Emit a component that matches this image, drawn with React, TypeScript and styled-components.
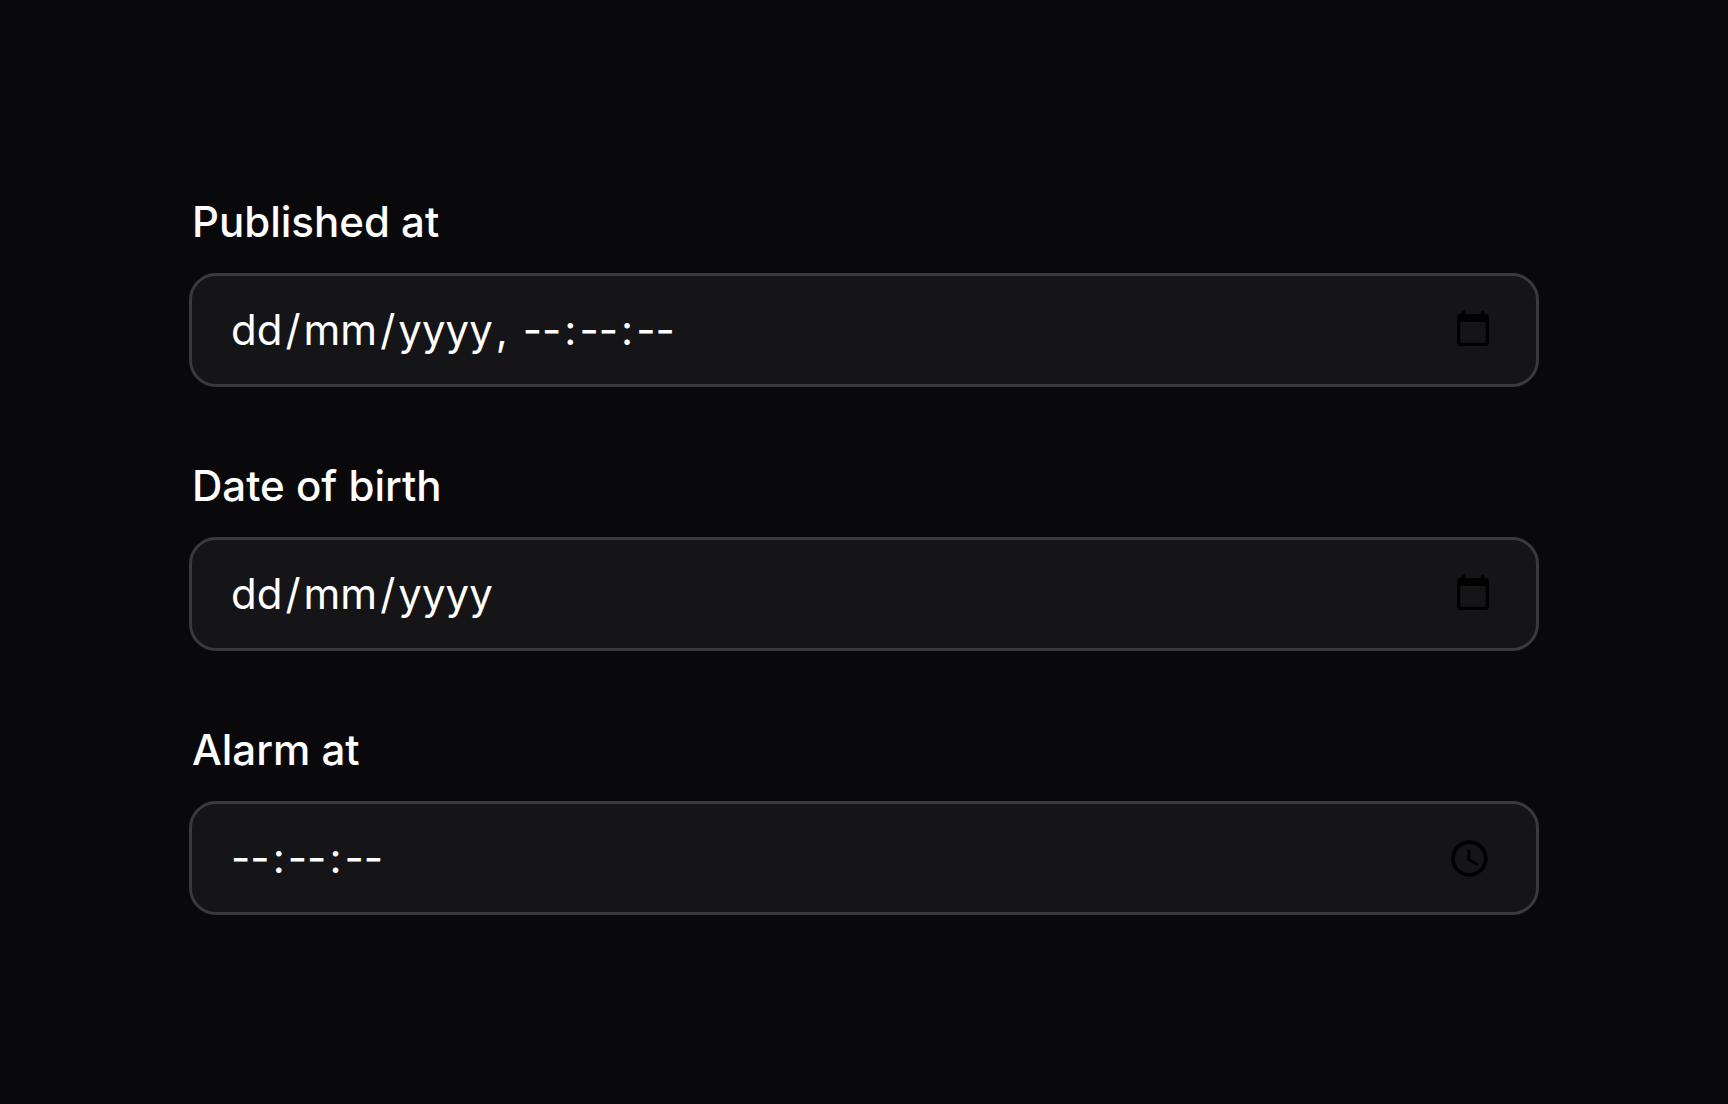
import React, { Fragment } from "react";
import styled, { createGlobalStyle } from "styled-components";

const GlobalStyle = createGlobalStyle`
  *, *::before, *::after { box-sizing: border-box; }
  body {
    margin: 0;
    background: #09090b;
    color: #ffffff;
    font-family: Inter, "Liberation Sans", sans-serif;
    -webkit-font-smoothing: antialiased;
  }
`;

const Form = styled.form`
  display: flex;
  flex-direction: column;
  justify-content: center;
  gap: 69px;
  min-height: 100vh;
  padding: 2px 189px 0;
`;

const Field = styled.div`
  display: flex;
  flex-direction: column;
  gap: 21px;
`;

const Label = styled.label`
  padding: 0 3px;
  font-size: 42px;
  line-height: 60px;
  font-weight: 500;
`;

const Control = styled.div`
  display: flex;
  align-items: center;
  padding: 24px 39px 24px 36px;
  border: 3px solid #3a3a3c;
  border-radius: 27px;
  background: #151517;
  font-size: 42px;
  line-height: 60px;
`;

const Segment = styled.input`
  field-sizing: content;
  padding: 0 3px;
  border: 0;
  outline: 0;
  background: transparent;
  color: inherit;
  font: inherit;

  &::placeholder {
    color: inherit;
    opacity: 1;
  }
`;

const Separator = styled.span`
  white-space: pre;
`;

const PickerButton = styled.button`
  display: flex;
  margin-left: auto;
  padding: 0;
  border: 0;
  background: transparent;
  color: #000000;
  cursor: pointer;
`;

const CalendarIcon = () => (
  <svg width="48" height="48" viewBox="-3 -2 30 30" fill="currentColor" aria-hidden="true">
    <path d="M20 3h-1V1h-2v2H7V1H5v2H4c-1.1 0-2 .9-2 2v16c0 1.1.9 2 2 2h16c1.1 0 2-.9 2-2V5c0-1.1-.9-2-2-2zm0 18H4V8h16v13z" />
  </svg>
);

const ClockIcon = () => (
  <svg width="48" height="48" viewBox="0.8 -1.5 26.4 26.4" fill="currentColor" aria-hidden="true">
    <path d="M11.99 2C6.47 2 2 6.48 2 12s4.47 10 9.99 10C17.52 22 22 17.52 22 12S17.52 2 11.99 2zM12 20c-4.42 0-8-3.58-8-8s3.58-8 8-8 8 3.58 8 8-3.58 8-8 8zm.5-13H11v6l5.25 3.15.75-1.23-4.5-2.67z" />
  </svg>
);

type Part = { name: string; hint: string; after?: string };

const dateParts: Part[] = [
  { name: "Day", hint: "dd", after: "/" },
  { name: "Month", hint: "mm", after: "/" },
  { name: "Year", hint: "yyyy" },
];

const timeParts: Part[] = [
  { name: "Hours", hint: "--", after: ":" },
  { name: "Minutes", hint: "--", after: ":" },
  { name: "Seconds", hint: "--" },
];

const dateTimeParts: Part[] = [
  ...dateParts.slice(0, 2),
  { ...dateParts[2], after: ", " },
  ...timeParts,
];

type PickerProps = {
  id: string;
  label: string;
  parts: Part[];
  picker: "date" | "time";
};

const Picker = ({ id, label, parts, picker }: PickerProps) => (
  <Field>
    <Label htmlFor={id}>{label}</Label>
    <Control role="group" aria-label={label}>
      {parts.map((part, index) => (
        <Fragment key={part.name}>
          <Segment
            id={index === 0 ? id : `${id}-${part.name.toLowerCase()}`}
            aria-label={`${label}, ${part.name}`}
            placeholder={part.hint}
            maxLength={part.hint.length}
            inputMode="numeric"
            autoComplete="off"
          />
          {part.after && <Separator>{part.after}</Separator>}
        </Fragment>
      ))}
      <PickerButton type="button" aria-label={`Show ${picker} picker`}>
        {picker === "date" ? <CalendarIcon /> : <ClockIcon />}
      </PickerButton>
    </Control>
  </Field>
);

export default function App() {
  return (
    <>
      <GlobalStyle />
      <Form>
        <Picker id="published-at" label="Published at" parts={dateTimeParts} picker="date" />
        <Picker id="date-of-birth" label="Date of birth" parts={dateParts} picker="date" />
        <Picker id="alarm-at" label="Alarm at" parts={timeParts} picker="time" />
      </Form>
    </>
  );
}
